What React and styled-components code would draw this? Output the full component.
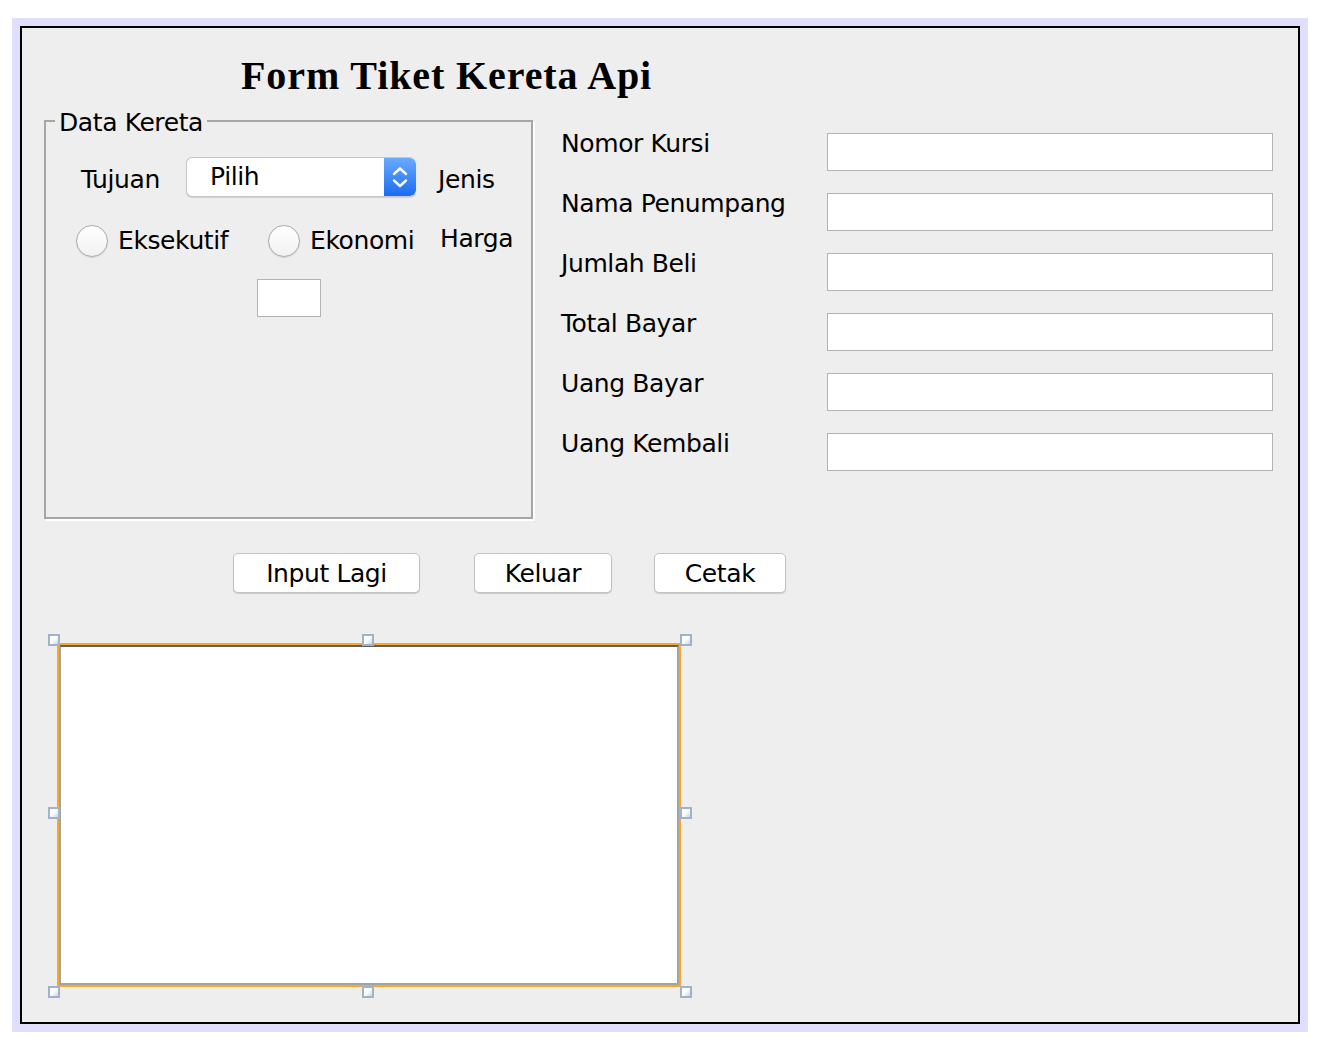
import React from 'react';
import styled, { createGlobalStyle } from 'styled-components';

const GlobalStyle = createGlobalStyle`
	body {
		margin: 0;
		background: #fff;
		font-family: "DejaVu Sans", sans-serif;
		color: #000;
	}
`;

const rightFields = ['Nomor Kursi', 'Nama Penumpang', 'Jumlah Beli', 'Total Bayar', 'Uang Bayar', 'Uang Kembali'];

// selection handles, relative to the text area's padding box
const handles = [
	[-11, -11], [303, -11], [621, -11],
	[-11, 162], [621, 162],
	[-11, 341], [303, 341], [621, 341],
];

const App = () => {
	return (
		<>
			<GlobalStyle />
			<Frame>
				<Panel>
					<Title>Form Tiket Kereta Api</Title>
					<Columns>
						<GroupBox>
							<Legend>Data Kereta</Legend>
							<SelectRow>
								<Text $pt={5}>Tujuan</Text>
								<Combo>
									<ComboValue>Pilih</ComboValue>
									<Stepper>
										<svg width="32" height="38" viewBox="0 0 32 38">
											<path d="M10 16 L16 10.5 L22 16" fill="none" stroke="#fff" strokeWidth="2.4" strokeLinecap="round" strokeLinejoin="round" />
											<path d="M10 22.5 L16 28 L22 22.5" fill="none" stroke="#fff" strokeWidth="2.4" strokeLinecap="round" strokeLinejoin="round" />
										</svg>
									</Stepper>
								</Combo>
								<Text $pt={5} $ml={22}>Jenis</Text>
							</SelectRow>
							<RadioRow>
								<RadioOption>
									<RadioCircle />
									<Text>Eksekutif</Text>
								</RadioOption>
								<RadioOption>
									<RadioCircle />
									<Text>Ekonomi</Text>
								</RadioOption>
								<Text $pb={4}>Harga</Text>
							</RadioRow>
							<SmallField />
						</GroupBox>
						<FormCol>
							{rightFields.map((label) => (
								<FormRow key={label}>
									<FormLabel>{label}</FormLabel>
									<Field />
								</FormRow>
							))}
						</FormCol>
					</Columns>
					<ButtonRow>
						<Button $w={187}>Input Lagi</Button>
						<Button $w={138} $ml={54}>Keluar</Button>
						<Button $w={132} $ml={42}>Cetak</Button>
					</ButtonRow>
					<TextAreaSelection>
						<TextArea />
						{handles.map(([x, y]) => (
							<Handle key={`${x}-${y}`} $x={x} $y={y} />
						))}
					</TextAreaSelection>
				</Panel>
			</Frame>
		</>
	);
};

const Frame = styled.div`
	margin: 18px 0 0 12px;
	width: 1296px;
	height: 1014px;
	padding: 8px;
	box-sizing: border-box;
	background: #dfdffc;
`;

const Panel = styled.div`
	height: 100%;
	box-sizing: border-box;
	border: 2px solid #000;
	background: #eeeeee;
	overflow: hidden;
`;

const Title = styled.div`
	margin: 28px 0 0 219px;
	font-family: "Liberation Serif", serif;
	font-weight: bold;
	font-size: 40px;
	line-height: 40px;
	letter-spacing: 0.9px;
`;

const Columns = styled.div`
	display: flex;
	align-items: flex-start;
	margin: 24px 0 0 22px;
`;

const GroupBox = styled.div`
	position: relative;
	width: 489px;
	height: 399px;
	box-sizing: border-box;
	border: 2px solid #a6a6a6;
	box-shadow: 2px 2px 0 #fff;
	display: flex;
	flex-direction: column;
	align-items: flex-start;
`;

const Legend = styled.div`
	position: absolute;
	top: -14px;
	left: 9px;
	padding: 0 4px;
	background: #eeeeee;
	font-size: 25px;
	letter-spacing: -0.4px;
	line-height: 30px;
	white-space: nowrap;
`;

const Text = styled.div`
	font-size: 25px;
	letter-spacing: -0.4px;
	line-height: 30px;
	white-space: nowrap;
	padding-top: ${(p) => p.$pt || 0}px;
	padding-bottom: ${(p) => p.$pb || 0}px;
	margin-left: ${(p) => p.$ml || 0}px;
`;

const SelectRow = styled.div`
	display: grid;
	grid-template-columns: 105px 230px auto;
	align-items: center;
	height: 40px;
	margin: 35px 0 0 35px;
`;

const Combo = styled.div`
	display: flex;
	align-items: center;
	height: 40px;
	box-sizing: border-box;
	border: 1px solid #c6c6c6;
	border-right: none;
	border-radius: 6px;
	background: #fff;
	box-shadow: 0 1px 1px rgba(0, 0, 0, 0.12);
	overflow: hidden;
`;

const ComboValue = styled.div`
	flex: 1;
	padding-left: 23px;
	font-size: 25px;
	letter-spacing: -0.4px;
	line-height: 30px;
`;

const Stepper = styled.div`
	width: 32px;
	height: 100%;
	display: flex;
	align-items: center;
	justify-content: center;
	background: linear-gradient(#6aaaff, #1a6cf3);
	border-radius: 0 6px 6px 0;
`;

const RadioRow = styled.div`
	display: grid;
	grid-template-columns: 192px 172px auto;
	align-items: center;
	height: 32px;
	margin: 27px 0 0 30px;
`;

const RadioOption = styled.div`
	display: flex;
	align-items: center;
	gap: 10px;
`;

const RadioCircle = styled.div`
	width: 32px;
	height: 32px;
	box-sizing: border-box;
	border-radius: 50%;
	border: 1px solid #ababab;
	background: linear-gradient(#ffffff, #f2f2f2);
	box-shadow: 0 1px 1px rgba(0, 0, 0, 0.1);
`;

const SmallField = styled.div`
	width: 64px;
	height: 38px;
	box-sizing: border-box;
	margin: 23px 0 0 211px;
	border: 1px solid #b3b3b3;
	background: #fff;
`;

const FormCol = styled.div`
	display: flex;
	flex-direction: column;
	gap: 22px;
	margin: 13px 0 0 28px;
`;

const FormRow = styled.div`
	display: flex;
	align-items: flex-start;
`;

const FormLabel = styled.div`
	width: 266px;
	margin-top: -4px;
	font-size: 25px;
	letter-spacing: -0.4px;
	line-height: 30px;
	white-space: nowrap;
`;

const Field = styled.div`
	width: 446px;
	height: 38px;
	box-sizing: border-box;
	border: 1px solid #b3b3b3;
	background: #fff;
`;

const ButtonRow = styled.div`
	display: flex;
	margin: 34px 0 0 211px;
`;

const Button = styled.button`
	width: ${(p) => p.$w}px;
	height: 40px;
	margin-left: ${(p) => p.$ml || 0}px;
	padding: 0;
	box-sizing: border-box;
	border: 1px solid #c2c2c2;
	border-radius: 5px;
	background: #fff;
	box-shadow: 0 1px 1px rgba(0, 0, 0, 0.15);
	font-family: "DejaVu Sans", sans-serif;
	font-size: 25px;
	letter-spacing: -0.4px;
	color: #000;
`;

const TextAreaSelection = styled.div`
	position: relative;
	width: 624px;
	height: 344px;
	box-sizing: border-box;
	margin: 50px 0 0 35px;
	border: 2px solid #f9a825;
`;

const TextArea = styled.div`
	height: 100%;
	box-sizing: border-box;
	border: 2px solid #a3a3a3;
	border-top-color: #5e5e5e;
	background: #fff;
`;

const Handle = styled.div`
	position: absolute;
	left: ${(p) => p.$x}px;
	top: ${(p) => p.$y}px;
	width: 12px;
	height: 12px;
	box-sizing: border-box;
	border: 2px solid #9fb4ca;
	background: linear-gradient(135deg, #ffffff 45%, #cdd5de);
`;

export default App;
